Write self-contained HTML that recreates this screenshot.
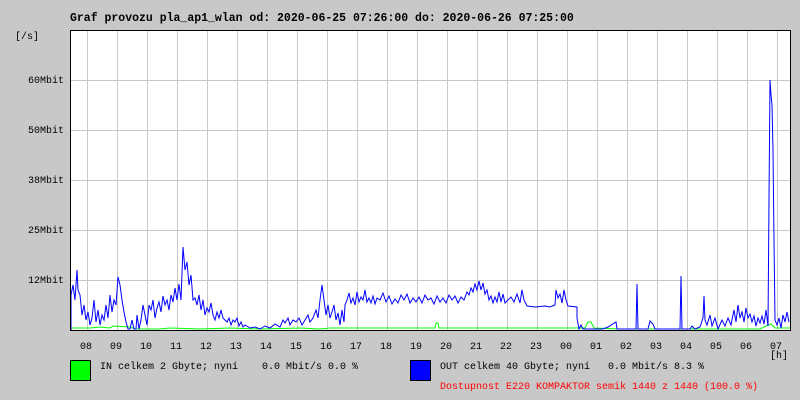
<!DOCTYPE html>
<html><head><meta charset="utf-8"><style>
body{margin:0;width:800px;height:400px;background:#c8c8c8;overflow:hidden;position:relative;font-family:"Liberation Mono","DejaVu Sans Mono",monospace}
.t{position:absolute;white-space:pre;font-size:10px;color:#000;line-height:12px}
</style></head><body>
<div class="t" style="left:70px;top:13px;font-size:11.5px;font-weight:bold;">Graf provozu pla_ap1_wlan od: 2020-06-25 07:26:00 do: 2020-06-26 07:25:00</div>
<div class="t" style="left:15px;top:32px">[/s]</div>
<div class="t" style="left:28px;top:76px">60Mbit</div>
<div class="t" style="left:28px;top:126px">50Mbit</div>
<div class="t" style="left:28px;top:176px">38Mbit</div>
<div class="t" style="left:28px;top:226px">25Mbit</div>
<div class="t" style="left:28px;top:276px">12Mbit</div>
<svg width="800" height="400" style="position:absolute;left:0;top:0">
<rect x="70.5" y="30.5" width="720" height="300" fill="#fff"/>
<g stroke="#c8c8c8" stroke-width="1">
<path d="M87.5 31V330M117.5 31V330M147.5 31V330M177.5 31V330M207.5 31V330M237.5 31V330M267.5 31V330M297.5 31V330M327.5 31V330M357.5 31V330M387.5 31V330M417.5 31V330M447.5 31V330M477.5 31V330M507.5 31V330M537.5 31V330M567.5 31V330M597.5 31V330M627.5 31V330M657.5 31V330M687.5 31V330M717.5 31V330M747.5 31V330M777.5 31V330"/>
<path d="M64 80.5H790M64 130.5H790M64 180.5H790M64 230.5H790M64 280.5H790"/>
</g>
<polyline fill="none" stroke="#0f0" stroke-width="1" points="71,328 90,328 100,327 110,328 113,326 130,327 135,329 160,329 170,328 200,329 230,328 260,329 300,328 320,329 330,328 350,328 370,328 400,328 435,328 436,323 438,323 439,328 470,328 520,328 560,328 585,328 588,322 591,322 594,328 620,329 700,329 760,329 766,326 771,324 775,328 790,328"/>
<polyline fill="none" stroke="#00f" stroke-width="1" points="71,330 71,295 73,285 75,300 77,270 78,290 80,295 82,315 84,305 86,320 88,312 90,325 92,318 94,300 96,322 98,310 100,325 102,315 104,320 106,305 108,318 110,295 112,312 114,300 116,305 118,277 120,285 122,300 124,312 126,322 128,329 130,329 132,320 134,329 136,329 137,315 139,329 141,320 143,305 145,315 147,325 149,305 151,310 153,300 155,318 157,308 159,302 161,312 163,296 165,305 167,300 169,310 171,295 173,302 175,288 177,300 179,284 181,300 183,247 185,270 187,262 189,285 191,275 193,300 195,298 197,305 199,295 201,310 203,300 205,315 207,308 209,312 211,303 213,315 215,320 217,312 219,318 221,310 223,318 225,320 227,322 229,318 231,325 233,320 235,322 237,318 239,326 241,322 243,327 245,325 250,328 255,327 260,329 265,326 270,328 275,324 280,327 283,320 285,323 288,318 290,325 293,320 296,322 299,318 302,325 305,320 308,315 310,322 313,318 316,310 318,318 320,300 322,285 324,300 326,315 328,305 330,318 332,312 334,305 336,320 338,313 340,325 342,310 344,322 345,305 347,300 349,293 351,303 353,298 355,305 357,292 359,302 361,297 363,300 365,290 367,302 369,298 371,303 373,296 375,304 377,298 380,300 383,293 386,302 389,296 392,304 395,299 398,303 401,295 404,300 407,294 410,303 413,298 416,302 419,297 422,303 425,295 428,300 431,298 434,304 437,296 440,302 443,298 446,303 449,295 452,300 455,296 458,303 461,297 464,300 467,292 469,295 471,288 473,292 475,284 477,290 479,281 481,290 483,283 485,294 487,290 489,300 491,296 493,303 495,297 497,302 499,292 501,302 503,294 505,303 508,300 511,297 514,302 517,294 520,303 522,290 524,300 527,306 535,307 545,306 550,307 555,305 556,290 558,298 560,294 562,303 564,290 566,300 568,306 577,307 577,318 579,329 581,325 583,329 595,329 603,329 608,327 616,322 617,329 636,329 637,284 638,329 648,329 650,321 653,324 655,329 680,329 681,276 682,329 690,329 692,326 695,329 700,327 703,318 704,296 705,320 707,325 710,315 712,326 715,318 718,329 722,320 725,326 728,318 731,325 734,310 736,322 738,305 740,318 742,312 744,322 746,308 748,318 750,314 752,322 754,316 756,326 758,318 760,323 762,316 764,324 766,310 768,326 769,200 770,80 771,95 772,105 773,150 774,240 775,320 777,325 779,318 781,328 783,315 785,322 787,312 789,322"/>
<rect x="70.5" y="30.5" width="720" height="300" fill="none" stroke="#000" stroke-width="1"/>
<rect x="70.5" y="360.5" width="20" height="20" fill="#0f0" stroke="#000"/>
<rect x="410.5" y="360.5" width="20" height="20" fill="#00f" stroke="#000"/>
</svg>
<div class="t" style="left:80px;top:342px">08</div><div class="t" style="left:110px;top:342px">09</div><div class="t" style="left:140px;top:342px">10</div><div class="t" style="left:170px;top:342px">11</div><div class="t" style="left:200px;top:342px">12</div><div class="t" style="left:230px;top:342px">13</div><div class="t" style="left:260px;top:342px">14</div><div class="t" style="left:290px;top:342px">15</div><div class="t" style="left:320px;top:342px">16</div><div class="t" style="left:350px;top:342px">17</div><div class="t" style="left:380px;top:342px">18</div><div class="t" style="left:410px;top:342px">19</div><div class="t" style="left:440px;top:342px">20</div><div class="t" style="left:470px;top:342px">21</div><div class="t" style="left:500px;top:342px">22</div><div class="t" style="left:530px;top:342px">23</div><div class="t" style="left:560px;top:342px">00</div><div class="t" style="left:590px;top:342px">01</div><div class="t" style="left:620px;top:342px">02</div><div class="t" style="left:650px;top:342px">03</div><div class="t" style="left:680px;top:342px">04</div><div class="t" style="left:710px;top:342px">05</div><div class="t" style="left:740px;top:342px">06</div><div class="t" style="left:770px;top:342px">07</div>
<div class="t" style="left:770px;top:351px">[h]</div>
<div class="t" style="left:100px;top:362px">IN celkem 2 Gbyte; nyní    0.0 Mbit/s 0.0 %</div>
<div class="t" style="left:440px;top:362px">OUT celkem 40 Gbyte; nyní   0.0 Mbit/s 8.3 %</div>
<div class="t" style="left:440px;top:382px;color:#f00">Dostupnost E220 KOMPAKTOR semik 1440 z 1440 (100.0 %)</div>
</body></html>
